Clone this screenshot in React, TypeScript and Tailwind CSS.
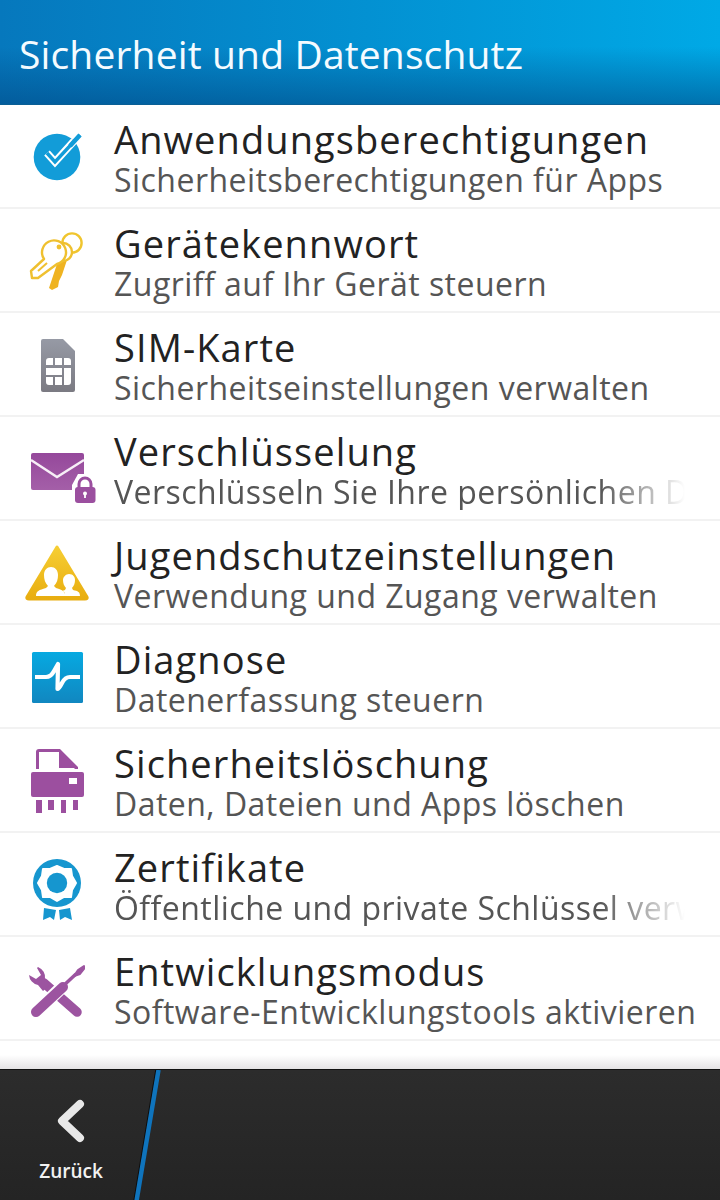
import React from "react";

const Box = ({ children }: { children: React.ReactNode }) => (
  <svg width="114" height="102" viewBox="0 0 114 102" className="block shrink-0">
    {children}
  </svg>
);

const Check = () => (
  <Box>
    <circle cx="57" cy="52" r="23.3" fill="#129cd8" />
    <path d="M47 48 L55 57 L74 36" fill="none" stroke="#fff" strokeWidth="7.5" />
    <path d="M47 48 L55 57 L80 30" fill="none" stroke="#129cd8" strokeWidth="3.4" />
    <path d="M70 41 L80 30" stroke="#129cd8" strokeWidth="4.5" />
  </Box>
);

const Keys = () => (
  <Box>
    <circle cx="72" cy="34" r="9.6" fill="none" stroke="#f0c52e" strokeWidth="2.4" />
    <path d="M57 55 L67 51 L62 66 L59 72 L58 78 L52 81 L49 79 Z" fill="#efb321" />
    <circle cx="63" cy="43" r="9" fill="#fff" stroke="#efc02f" strokeWidth="2.4" />
    <path d="M31 62 L44 50 A12 12 0 1 1 57 55 L38 69 L32 69 Z" fill="#fff" stroke="#efc02f" strokeWidth="2.4" strokeLinejoin="round" />
    <path d="M38 62 L47 54" stroke="#efc02f" strokeWidth="2" />
    <circle cx="59" cy="38" r="2.4" fill="#efc02f" />
  </Box>
);

const Sim = () => (
  <Box>
    <defs>
      <linearGradient id="s" x1="0" y1="0" x2="0" y2="1">
        <stop offset="0" stopColor="#969aa5" />
        <stop offset="1" stopColor="#7b7a82" />
      </linearGradient>
    </defs>
    <path d="M41 28 Q41 26 43 26 L63 26 L75 38 L75 77 Q75 79 73 79 L43 79 Q41 79 41 77 Z" fill="url(#s)" />
    <path d="M46 48 q0 -3 3 -3 h4 v7 h-7 Z M55 45 h7 v7 h-7 Z M64 45 h4 q3 0 3 3 v4 h-7 Z M46 55 h16 v7 h-16 Z M64 55 h7 v14 q0 3 -3 3 h-4 Z M46 64 h7 v8 h-4 q-3 0 -3 -3 Z M55 64 h7 v8 h-7 Z" fill="#fff" />
  </Box>
);

const Mail = () => (
  <Box>
    <defs>
      <linearGradient id="m" x1="0" y1="0" x2="0" y2="1">
        <stop offset="0" stopColor="#95489b" />
        <stop offset="1" stopColor="#a45fa8" />
      </linearGradient>
    </defs>
    <rect x="31" y="36" width="53" height="37" rx="2" fill="url(#m)" />
    <path d="M31 43 L57 60 L84 43" fill="none" stroke="#f7eff7" strokeWidth="2.4" />
    <path d="M72 89 V68 L78 57 H92 L98 68 V89 Z" fill="#fff" />
    <path d="M79 71 V67 A6 6 0 0 1 91 67 V71" fill="none" stroke="#9b4f9f" strokeWidth="3" />
    <rect x="75" y="70" width="20.5" height="16" rx="3" fill="#9b4f9f" />
    <circle cx="85" cy="76.5" r="2" fill="#fff" />
    <rect x="84.1" y="77" width="1.8" height="4" fill="#fff" />
  </Box>
);

const Warn = () => (
  <Box>
    <defs>
      <linearGradient id="w" x1="0" y1="0" x2="0" y2="1">
        <stop offset="0" stopColor="#f6ce33" />
        <stop offset="1" stopColor="#e8ad10" />
      </linearGradient>
    </defs>
    <path d="M57 26 L87 76 Q88 78 85 78 L29 78 Q26 78 27 76 Z" fill="url(#w)" stroke="url(#w)" strokeWidth="3" strokeLinejoin="round" />
    <path d="M36 75 C36 70 39 69 46 67 L48 65 C45 62 44 58 44 54 C44 49 47 46 51 46 C55 46 58 49 58 54 C58 58 57 62 54 65 L56 67 C63 69 65 71 65 75 Z" fill="#fff" />
    <path d="M59 75 H80 C80 71 78 70 73 69 L72 67 C74 65 75 62 75 59 C75 56 73 53 69 53 C66 53 63 56 63 59 C63 62 64 65 66 67 L65 69 L62 70 C65 71 67 73 59 75 Z" fill="#fff" />
  </Box>
);

const Pulse = () => (
  <Box>
    <defs>
      <linearGradient id="p" x1="0" y1="0" x2="0" y2="1">
        <stop offset="0" stopColor="#06a9e1" />
        <stop offset="1" stopColor="#1187c0" />
      </linearGradient>
    </defs>
    <rect x="32" y="27" width="51" height="51" rx="1.5" fill="url(#p)" />
    <path d="M35 52 H46 Q51 52 54 46 L58 39 L57.5 64 Q59 64 62 58 Q65 52 70 52 H80" fill="none" stroke="#fff" strokeWidth="4.2" strokeLinejoin="round" />
  </Box>
);

const Shredder = () => (
  <Box>
    <path d="M36 40 V23 Q36 20 39 20 H60 L78 38 V40 H75 L74 39 H59 V23 H39 V40 Z" fill="#9c4f9f" />
    <rect x="31" y="43" width="53" height="25" rx="2" fill="#9c4f9f" />
    <rect x="69" y="49" width="8" height="6" fill="#fff" />
    <path d="M36 71 h6 v13 h-6 Z M48 71 h6 v10 h-6 Z M61 71 h5 v13 h-5 Z M73 71 h5 v10 h-5 Z" fill="#9c4f9f" />
  </Box>
);

const Cert = () => (
  <Box>
    <circle cx="57" cy="50" r="24" fill="#1696cf" />
    <path d="M57 33 L64 36 L71 36 L72 43 L76 50 L72 57 L71 64 L64 64 L57 68 L50 64 L43 64 L42 57 L38 50 L42 43 L43 36 L50 36 Z" fill="#fff" stroke="#fff" strokeWidth="2" strokeLinejoin="round" />
    <circle cx="57" cy="50" r="10.2" fill="#1696cf" />
    <path d="M44 75 L56 77 L54 87 L50 84 L43 87 Z M70 75 L59 77 L60 87 L65 84 L72 87 Z" fill="#1696cf" />
  </Box>
);

const Tools = () => (
  <Box>
    <path d="M44 46 L77 75" stroke="#9c54a0" strokeWidth="9.5" strokeLinecap="round" />
    <path d="M38 30 A11 11 0 0 1 45 42 L50 48 L43 54 L38 48 A11 11 0 0 1 29 38 L36 42 L41 38 L37 31 Z" fill="#9c54a0" />
    <path d="M35 76 L60 52" stroke="#fff" strokeWidth="13" />
    <path d="M36 75 L63 50" stroke="#9c54a0" strokeWidth="10" strokeLinecap="round" />
    <path d="M62 50 L76 37" stroke="#9c54a0" strokeWidth="3.5" />
    <path d="M74 39 L78 33 L84 29 L84 32 L80 37 Z" fill="#9c54a0" stroke="#9c54a0" strokeWidth="2" strokeLinejoin="round" />
  </Box>
);

const rows: { icon: React.ReactNode; title: string; sub: string; fade?: boolean }[] = [
  { icon: <Check />, title: "Anwendungsberechtigungen", sub: "Sicherheitsberechtigungen für Apps" },
  { icon: <Keys />, title: "Gerätekennwort", sub: "Zugriff auf Ihr Gerät steuern" },
  { icon: <Sim />, title: "SIM-Karte", sub: "Sicherheitseinstellungen verwalten" },
  { icon: <Mail />, title: "Verschlüsselung", sub: "Verschlüsseln Sie Ihre persönlichen Daten", fade: true },
  { icon: <Warn />, title: "Jugendschutzeinstellungen", sub: "Verwendung und Zugang verwalten" },
  { icon: <Pulse />, title: "Diagnose", sub: "Datenerfassung steuern" },
  { icon: <Shredder />, title: "Sicherheitslöschung", sub: "Daten, Dateien und Apps löschen" },
  { icon: <Cert />, title: "Zertifikate", sub: "Öffentliche und private Schlüssel verwalten", fade: true },
  { icon: <Tools />, title: "Entwicklungsmodus", sub: "Software-Entwicklungstools aktivieren" },
];

export default function App() {
  return (
    <div className="w-[720px] h-[1200px] flex flex-col bg-white overflow-hidden font-['Open_Sans',sans-serif]">
      <header className="h-[105px] shrink-0 flex items-center pl-[19px] pt-[3px] bg-[linear-gradient(to_bottom,rgba(0,60,120,0)_45%,rgba(0,70,130,0.55)_100%),linear-gradient(to_right,#0678bd,#00a9e6)] border-b border-[#0a5f95]">
        <h1 className="text-[39px] leading-none text-[#f4fbff] tracking-[0.15px]">Sicherheit und Datenschutz</h1>
      </header>
      <main className="flex-1 flex flex-col">
        {rows.map((r) => (
          <div key={r.title} className="h-[104px] shrink-0 flex items-start overflow-hidden border-b-2 border-[#f2f2f2]">
            <div className="w-[114px] shrink-0">{r.icon}</div>
            <div className="flex-1 min-w-0 flex flex-col pt-[11px]">
              <div className="text-[38px] leading-[46px] text-[#222222] tracking-[1.1px] whitespace-nowrap">{r.title}</div>
              <div
                className={
                  r.fade
                    ? "text-[32px] leading-[36px] text-[#555555] tracking-[0.47px] whitespace-nowrap w-[571px] overflow-hidden [mask-image:linear-gradient(to_right,#000_85%,transparent_100%)]"
                    : "text-[32px] leading-[36px] text-[#555555] tracking-[0.47px] whitespace-nowrap"
                }
              >
                {r.sub}
              </div>
            </div>
          </div>
        ))}
        <div className="flex-1 bg-[linear-gradient(to_bottom,#ffffff_50%,#e4e2e4_100%)]" />
      </main>
      <footer className="h-[131px] shrink-0 relative flex bg-[linear-gradient(to_bottom,#2c2c2c,#242424)] border-t border-[#111111]">
        <div className="w-[142px] flex flex-col items-center pt-[28px]">
          <svg width="34" height="46" viewBox="0 0 34 46">
            <path d="M26 6 L8 23 L26 40" fill="none" stroke="#e8e8e8" strokeWidth="8" strokeLinecap="round" strokeLinejoin="round" />
          </svg>
          <span className="mt-[15px] text-[19px] leading-[24px] font-semibold text-[#f2f2f2]">Zurück</span>
        </div>
        <svg className="absolute left-[130px] top-0" width="36" height="131" viewBox="0 0 36 131">
          <path d="M26 0 L4 131" stroke="#0d0d0d" strokeWidth="1.5" />
          <path d="M28.5 0 L6.5 131" stroke="#0f74bd" strokeWidth="4.5" />
        </svg>
      </footer>
    </div>
  );
}
